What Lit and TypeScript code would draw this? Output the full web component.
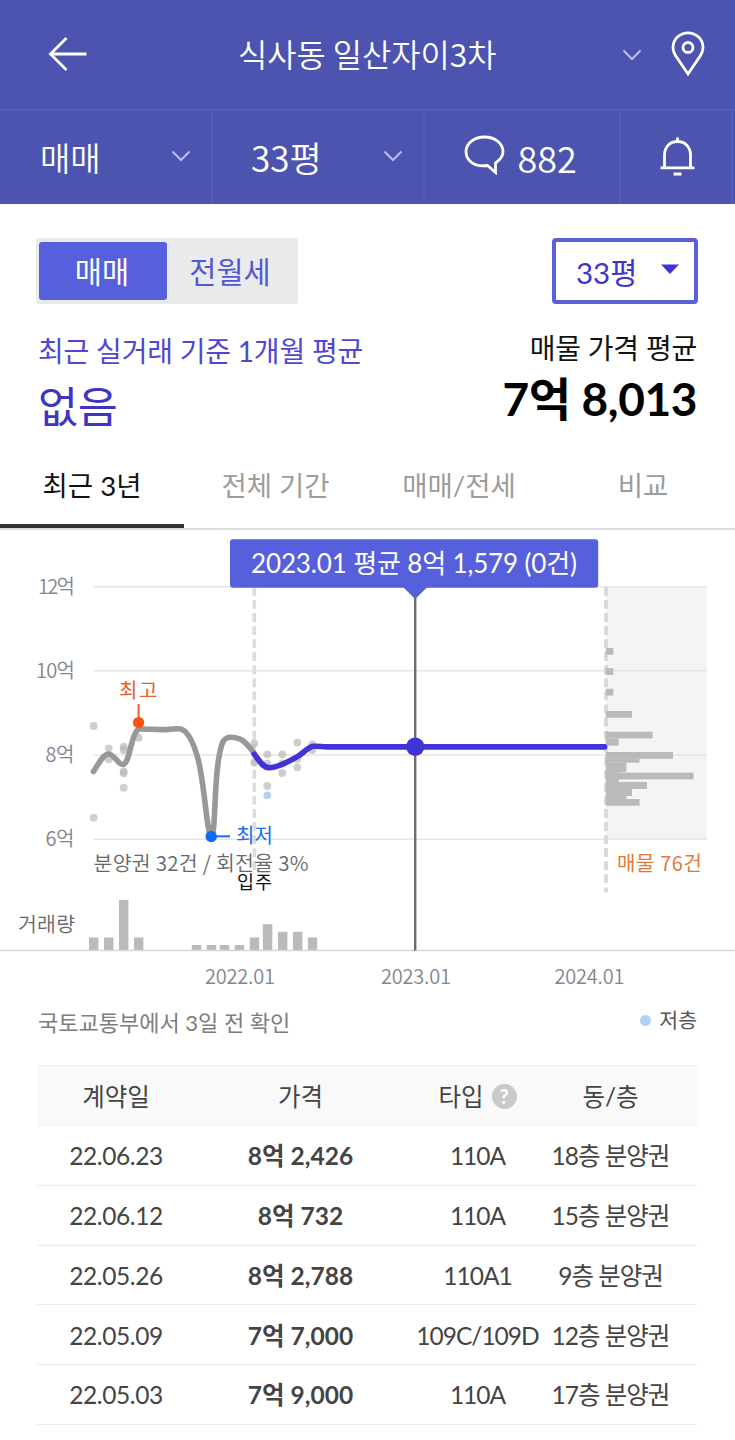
import { LitElement, html, css, svg } from "lit";
import { customElement } from "lit/decorators.js";

const chevron = html`<svg class="chevron" width="20" height="13" viewBox="0 0 20 13">
  <path d="M1.5 1.5 L10 10 L18.5 1.5" fill="none" stroke="#b9bcf0" stroke-width="2" />
</svg>`;

@customElement("price-chart")
export class PriceChart extends LitElement {
  static styles = css`
    :host {
      display: block;
      height: 470px;
    }
    svg {
      display: block;
    }
    text {
      font-family: "Noto Sans CJK KR", sans-serif;
    }
    .lato {
      font-family: "Lato", "Noto Sans CJK KR", sans-serif;
    }
    .axis {
      font-size: 20px;
      font-weight: 350;
      fill: #84848e;
    }
  `;

  private dots = [
    [93.7, 726], [93.7, 817.7], [108.7, 748.3], [108.7, 759.3], [123.7, 746.7], [123.7, 750],
    [123.7, 771.5], [123.7, 773.3], [123.7, 787.7], [138.7, 737.7], [254.3, 743.3], [254.3, 762.7],
    [267.3, 754.3], [267.3, 763.3], [267.3, 785.9], [282.3, 754.3], [282.3, 763.5], [282.3, 773],
    [297.3, 742.7], [297.3, 759], [297.3, 767.3], [312.3, 744.5], [312.3, 750],
  ];
  private volumes = [
    [89, 937.5], [104, 937.5], [119, 900], [134, 937.5], [191.8, 945], [206.8, 945], [219.8, 945],
    [234.8, 945], [249.8, 937.5], [262.9, 924.2], [278, 931.8], [293, 931.8], [307.8, 937.5],
  ];
  private listings = [
    [648, 6.7, 613.3], [668.2, 6.7, 613.3], [688.8, 6.7, 613.3], [711, 6.8, 632], [731.7, 6.7, 652.6],
    [738.4, 7.3, 618.7], [752, 6.8, 673], [758.7, 4, 639.5], [762.6, 9.6, 626.4], [772.6, 6.8, 693.6],
    [771, 12, 618.7], [782, 7, 647], [789, 7, 632], [796, 3.2, 626.4], [799, 6.7, 639.5],
  ];

  render() {
    return html`<svg width="735" height="470" viewBox="0 530 735 470">
      <rect x="606" y="587" width="101" height="252.5" fill="#f4f4f4" />
      ${[586.7, 670.8, 755, 839.3].map(
        (y) => svg`<line x1="93.5" x2="706.8" y1=${y} y2=${y} stroke="#e6e6e6" stroke-width="1.6" />`
      )}
      <line x1="254.3" x2="254.3" y1="587" y2="872" stroke="#dcdcdc" stroke-width="3.6" stroke-dasharray="8.8 4.26" />
      <line x1="606" x2="606" y1="587" y2="892.5" stroke="#d8d8d8" stroke-width="3.8" stroke-dasharray="8.8 4.26" />
      ${this.listings.map(
        ([y, h, x]) => svg`<rect x="605.7" y=${y} width=${x - 605.7} height=${h} fill="#bababa" />`
      )}
      ${this.volumes.map(
        ([x, y]) => svg`<rect x=${x} y=${y} width="9.4" height=${950.5 - y} fill="#bababa" />`
      )}
      <line x1="0" x2="735" y1="950.5" y2="950.5" stroke="#d6d6d6" stroke-width="1.6" />
      ${this.dots.map(([x, y]) => svg`<circle cx=${x} cy=${y} r="3.9" fill="#b4b4b4" fill-opacity=".65" />`)}
      <circle cx="267.3" cy="795.4" r="3.8" fill="#b2d1f4" />
      <path
        d="M93.5 771.5 C99 763 103 754.5 108.3 754 C113.5 753.5 119 766 123.7 764.3 C130 762 131 733 138.7 729.2 C141 728.2 160 730 167 729.6 C173 729.3 177.5 727.8 181.7 729.2 C188 732 194 744 198.3 760 C205 787 207 836 211.3 836 C215.500 836 214 787 218.500 760 C221 744 223 737.500 230 737.200 C240 737 245 740.500 254.300 753.500"
        fill="none" stroke="#989898" stroke-width="5.6" stroke-linecap="round" />
      <path
        d="M254.3 754.3 C260 761.5 263 767.6 269 767.8 C278 767.5 289 761.5 297.3 756.7 C303 753.5 308 747 313.3 746.3 C318 746 322 746.9 327 746.9 L604.5 746.9"
        fill="none" stroke="#4034d8" stroke-width="5.6" stroke-linecap="round" stroke-linejoin="round" />
      <line x1="138.6" x2="138.6" y1="704" y2="722" stroke="#f2602c" stroke-width="2" />
      <circle cx="138.6" cy="722.6" r="5.7" fill="#fb5318" />
      <line x1="211" x2="230" y1="836.3" y2="836.3" stroke="#1a6cf0" stroke-width="2" />
      <circle cx="211.2" cy="836.5" r="5.7" fill="#136af2" />
      <line x1="415.2" x2="415.2" y1="590" y2="950.5" stroke="#6c6c6c" stroke-width="2.4" />
      <circle cx="415.2" cy="746.8" r="9.2" fill="#4034d8" />
      <path d="M403 587 H427.5 L415.2 599 Z" fill="#5660dc" />
      <rect x="230" y="539.2" width="368.2" height="48.6" rx="3" fill="#5660dc" />
      <text class="lato" x="251" y="573" font-size="26" fill="#fff" textLength="326">2023.01 평균 8억 1,579 (0건)</text>

      <text class="axis" x="38" y="593.5" textLength="37">12억</text>
      <text class="axis" x="36" y="677.5" textLength="39">10억</text>
      <text class="axis" x="45.5" y="761.5" textLength="29">8억</text>
      <text class="axis" x="45.5" y="845.5" textLength="29">6억</text>
      <text x="119" y="697.5" font-size="20" fill="#ee5a28" textLength="38.5">최고</text>
      <text x="236" y="843" font-size="20" fill="#1a6cf0" textLength="37">최저</text>
      <text x="93.500" y="870.5" font-size="20.500" font-weight="350" fill="#666" textLength="215">분양권 32건 / 회전율 3%</text>
      <text x="237" y="889" font-size="18.500" fill="#111" textLength="35">입주</text>
      <text x="617" y="870.5" font-size="20" fill="#e07b35" textLength="85">매물 76건</text>
      <text x="18" y="932" font-size="20.500" font-weight="350" fill="#666" textLength="57">거래량</text>
      <text class="axis" x="205" y="984" textLength="70">2022.01</text>
      <text class="axis" x="381" y="984" textLength="70">2023.01</text>
      <text class="axis" x="554.500" y="984" textLength="70">2024.01</text>
    </svg>`;
  }
}

@customElement("deal-table")
export class DealTable extends LitElement {
  static styles = css`
    :host {
      display: block;
      margin: 0 38px 0 37px;
      font: 24.5px "Lato", "Noto Sans CJK KR", sans-serif;
      color: #444;
    }
    .row {
      display: grid;
      grid-template-columns: 158px 211px 143px 123px;
      height: 59.75px;
      box-sizing: border-box;
      border-bottom: 1.5px solid #ececec;
      padding-top: 2px;
      align-items: center;
      justify-items: center;
      white-space: nowrap;
      line-height: 36px;
    }
    .head {
      height: 61px;
      background: #f9f9f9;
      border-top: 1.5px solid #f2f2f2;
      border-bottom-color: #f2f2f2;
    }
    .date {
      letter-spacing: -0.4px;
    }
    .price {
      font-weight: 700;
    }
    .tight {
      letter-spacing: -1px;
    }
    .type {
      display: flex;
      align-items: center;
      gap: 8px;
    }
    .help {
      width: 25px;
      height: 25px;
      border-radius: 50%;
      background: #c9c9c9;
      color: #fff;
      font: 700 20px/25px "Lato", sans-serif;
      text-align: center;
    }
  `;

  private deals = [
    ["22.06.23", "8억 2,426", "110A", "18층 분양권"],
    ["22.06.12", "8억 732", "110A", "15층 분양권"],
    ["22.05.26", "8억 2,788", "110A1", "9층 분양권"],
    ["22.05.09", "7억 7,000", "109C/109D", "12층 분양권"],
    ["22.05.03", "7억 9,000", "110A", "17층 분양권"],
  ];

  render() {
    return html`
      <div class="row head">
        <span>계약일</span><span>가격</span>
        <span class="type">타입<span class="help">?</span></span><span>동/층</span>
      </div>
      ${this.deals.map(
        ([date, price, type, floor]) => html`<div class="row">
          <span class="date">${date}</span><span class="price">${price}</span>
          <span class="tight">${type}</span><span class="tight">${floor}</span>
        </div>`
      )}
    `;
  }
}

@customElement("app-root")
export class AppRoot extends LitElement {
  static styles = css`
    :host {
      display: block;
      width: 735px;
      height: 1440px;
      overflow: hidden;
      background: #fff;
      font-family: "Lato", "Noto Sans CJK KR", sans-serif;
      white-space: nowrap;
    }
    svg {
      display: block;
      flex: none;
    }
    header {
      height: 204px;
      background: #4c54b0;
      color: #fff;
      font-family: "Noto Sans CJK KR", sans-serif;
    }
    .title-bar {
      display: flex;
      align-items: center;
      height: 109px;
      box-sizing: border-box;
      padding: 0 30px 2px 48px;
    }
    .title {
      flex: 1;
      padding: 0 0 2px 151px;
      font-size: 31.8px;
      line-height: 48px;
      font-weight: 350;
    }
    .title-bar .chevron {
      margin-top: 3px;
    }
    .pin {
      margin-left: 29px;
    }
    .filters {
      display: grid;
      grid-template-columns: 213px 211.5px 196.5px 112px 2px;
      height: 95px;
      box-sizing: border-box;
      border-top: 2px solid #535bb6;
    }
    .filter {
      display: flex;
      align-items: center;
      justify-content: space-between;
      box-sizing: border-box;
      border-right: 2px solid #535bb6;
      padding: 0 20px 2px 40px;
      font-size: 33px;
      line-height: 48px;
      font-weight: 350;
    }
    .size {
      padding-left: 38px;
      font-size: 35px;
    }
    .talk {
      justify-content: flex-start;
      gap: 13px;
      padding-left: 39px;
      font-size: 36px;
    }
    .talk svg {
      margin-top: -4px;
    }
    .bell {
      justify-content: center;
      padding: 0 0 3px 2px;
    }
    .controls {
      display: flex;
      justify-content: space-between;
      padding: 34px 37px 0 36px;
      height: 66px;
    }
    .segment {
      display: flex;
      width: 262px;
      height: 66px;
      padding: 4px 3px;
      box-sizing: border-box;
      background: #e9eaec;
      border-radius: 3px;
      font-size: 29.5px;
      line-height: 59px;
      color: #5358d0;
    }
    .segment span {
      flex: 1;
      text-align: center;
      padding-right: 2px;
    }
    .segment .on {
      flex: none;
      width: 128px;
      height: 58px;
      box-sizing: border-box;
      border-radius: 3px;
      background: #5660dc;
      color: #fff;
    }
    .select {
      display: flex;
      align-items: center;
      justify-content: space-between;
      width: 146px;
      height: 66px;
      box-sizing: border-box;
      border: 4px solid #5b60d6;
      border-radius: 4px;
      padding: 4px 15px 0 20px;
      font-size: 29.5px;
      line-height: 50px;
      color: #4034d0;
    }
    .select svg {
      margin-top: -7px;
    }
    .summary {
      display: flex;
      justify-content: space-between;
      padding: 0 38px;
      height: 138px;
      box-sizing: border-box;
    }
    .avg {
      padding-top: 27px;
      color: #5046d4;
      font-size: 28px;
      line-height: 40px;
      letter-spacing: -0.2px;
    }
    .avg .value {
      font-size: 43.5px;
      line-height: 70px;
      color: #4034c8;
    }
    .ask {
      padding-top: 24px;
      text-align: right;
      color: #111;
      font-size: 28px;
      line-height: 40px;
      letter-spacing: -0.2px;
    }
    .ask .value {
      font-size: 46px;
      line-height: 62px;
      font-weight: 700;
      letter-spacing: -0.4px;
      color: #000;
    }
    nav {
      display: grid;
      grid-template-columns: 184px 183px 184px 184px;
      height: 88px;
      box-sizing: border-box;
      border-bottom: 2px solid #dcdcdc;
    }
    .tab {
      text-align: center;
      font-size: 27.5px;
      line-height: 88px;
      height: 86px;
      box-sizing: border-box;
      color: #9c9c9c;
    }
    .tab.on {
      color: #111;
      border-bottom: 4px solid #333;
    }
    .note {
      display: flex;
      justify-content: space-between;
      height: 65px;
      box-sizing: border-box;
      padding: 7px 38px 0 38px;
      color: #7c7c7c;
      font-size: 22px;
      line-height: 32px;
    }
    .legend {
      display: flex;
      align-items: center;
      gap: 8px;
      height: 26px;
      font-size: 20.5px;
      color: #555;
    }
    .legend i {
      width: 11px;
      height: 11px;
      border-radius: 50%;
      background: #b0d0f4;
    }
  `;

  render() {
    return html`
      <header>
        <div class="title-bar">
          <svg width="39" height="36" viewBox="0 0 39 36">
            <path d="M18.5 2 L2.5 18 L18.5 34 M2.5 18 H38.5" fill="none" stroke="#fff" stroke-width="2.8" />
          </svg>
          <div class="title">식사동 일산자이3차</div>
          ${chevron}
          <svg class="pin" width="34" height="46" viewBox="0 0 34 46">
            <path d="M17 43 L4.5 24.500 C2.800 21.800 2 19.500 2 16.500 A15 14.700 0 0 1 32 16.500 C32 19.500 31.200 21.800 29.500 24.500 Z" fill="none" stroke="#fff" stroke-width="2.800" />
            <circle cx="17" cy="16.500" r="5" fill="none" stroke="#fff" stroke-width="2.800" />
          </svg>
        </div>
        <div class="filters">
          <div class="filter">매매${chevron}</div>
          <div class="filter size">33평${chevron}</div>
          <div class="filter talk">
            <svg width="41" height="40" viewBox="0 0 41 40">
              <path d="M23.500 30.500 C10 32.500 2 25.500 2 16.500 C2 8 10.500 2 20.500 2 C30.500 2 39 8 39 16.500 C39 21.500 36 25 31.500 28 V37.500 Z" fill="none" stroke="#fff" stroke-width="2.800" stroke-linejoin="miter" />
            </svg>
            <span>882</span>
          </div>
          <div class="filter bell">
            <svg width="35" height="39" viewBox="0 0 35 39">
              <path d="M4.500 30 V18 C4.500 10 10 4.500 17.500 4.500 S30.500 10 30.500 18 V30 M0.500 30.800 H34.500 M17.500 0.500 V4.500 M13.500 37 H21.500" fill="none" stroke="#fff" stroke-width="2.800" />
            </svg>
          </div>
        </div>
      </header>
      <div class="controls">
        <div class="segment"><span class="on">매매</span><span>전월세</span></div>
        <div class="select">
          33평
          <svg width="18" height="11" viewBox="0 0 18 11"><path d="M0 .5 H18 L9 10 Z" fill="#4034d8" /></svg>
        </div>
      </div>
      <div class="summary">
        <div class="avg">
          최근 실거래 기준 1개월 평균
          <div class="value">없음</div>
        </div>
        <div class="ask">
          매물 가격 평균
          <div class="value">7억 8,013</div>
        </div>
      </div>
      <nav>
        <div class="tab on">최근 3년</div>
        <div class="tab">전체 기간</div>
        <div class="tab">매매/전세</div>
        <div class="tab">비교</div>
      </nav>
      <price-chart></price-chart>
      <div class="note">
        <span>국토교통부에서 3일 전 확인</span>
        <span class="legend"><i></i>저층</span>
      </div>
      <deal-table></deal-table>
    `;
  }
}
